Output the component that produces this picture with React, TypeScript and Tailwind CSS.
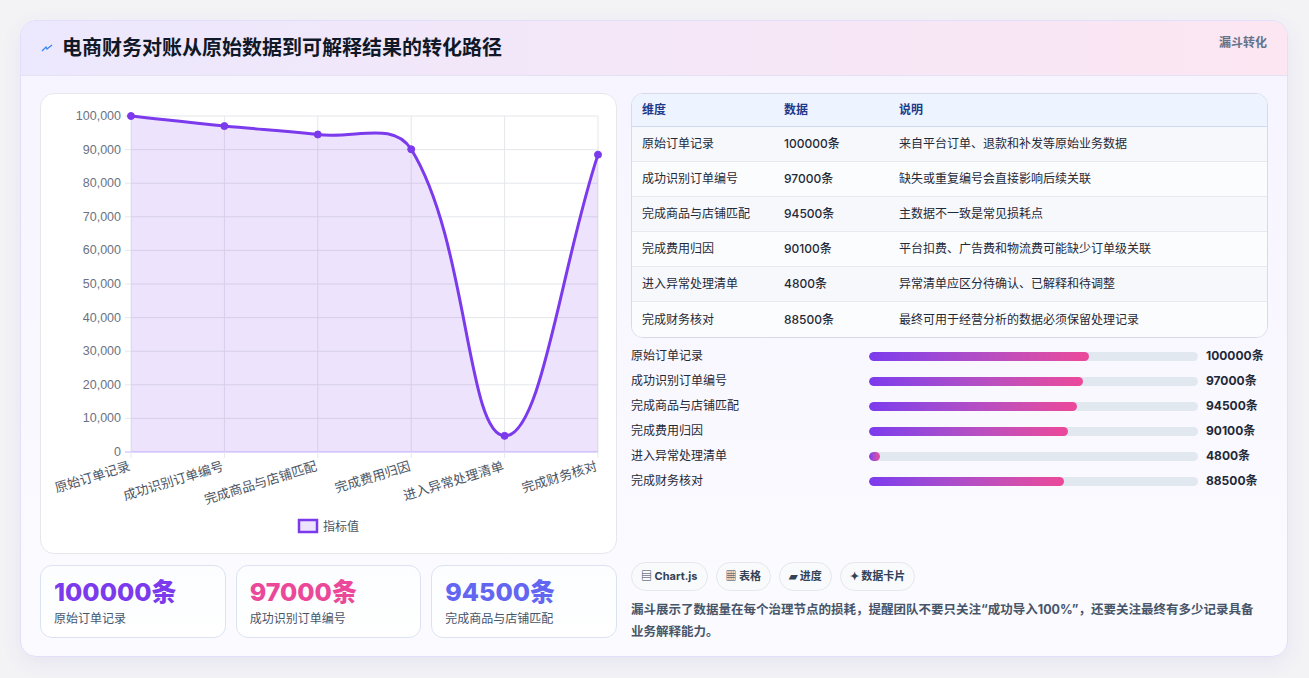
import React from "react";

const data = [
  { n: "原始订单记录", v: 100000, d: "来自平台订单、退款和补发等原始业务数据" },
  { n: "成功识别订单编号", v: 97000, d: "缺失或重复编号会直接影响后续关联" },
  { n: "完成商品与店铺匹配", v: 94500, d: "主数据不一致是常见损耗点" },
  { n: "完成费用归因", v: 90100, d: "平台扣费、广告费和物流费可能缺少订单级关联" },
  { n: "进入异常处理清单", v: 4800, d: "异常清单应区分待确认、已解释和待调整" },
  { n: "完成财务核对", v: 88500, d: "最终可用于经营分析的数据必须保留处理记录" },
];

const X0 = 90, X1 = 557, Y0 = 22, Y1 = 358;
const pts = data.map((d, i) => [X0 + (i * (X1 - X0)) / 5, Y1 - (d.v / 100000) * (Y1 - Y0)]);

function path() {
  const t = 0.4;
  const cps = pts.map((p, i) => {
    const prev = pts[i - 1] || p, next = pts[i + 1] || p;
    const d01 = Math.hypot(p[0] - prev[0], p[1] - prev[1]);
    const d12 = Math.hypot(next[0] - p[0], next[1] - p[1]);
    const s01 = d01 / (d01 + d12 || 1), s12 = d12 / (d01 + d12 || 1);
    const fa = t * s01, fb = t * s12;
    const c1 = [p[0] - fa * (next[0] - prev[0]), Math.min(Y1, Math.max(Y0, p[1] - fa * (next[1] - prev[1])))];
    const c2 = [p[0] + fb * (next[0] - prev[0]), Math.min(Y1, Math.max(Y0, p[1] + fb * (next[1] - prev[1])))];
    return { c1, c2 };
  });
  let s = `M${pts[0][0]},${pts[0][1]}`;
  for (let i = 1; i < pts.length; i++) {
    s += ` C${cps[i - 1].c2[0]},${cps[i - 1].c2[1]} ${cps[i].c1[0]},${cps[i].c1[1]} ${pts[i][0]},${pts[i][1]}`;
  }
  return s;
}

function Chart() {
  const d = path();
  const ticks = Array.from({ length: 11 }, (_, i) => i * 10000);
  return (
    <svg width="577" height="461" className="block">
      {ticks.map((t) => {
        const y = Y1 - (t / 100000) * (Y1 - Y0);
        return (
          <g key={t}>
            <line x1={X0 - 6} x2={X1} y1={y} y2={y} stroke={t === 0 ? "#c4b5fd" : "#e5e7eb"} />
            <text x={X0 - 10} y={y + 4} textAnchor="end" fontSize="12.5" fill="#6b7280" fontFamily="Liberation Sans, sans-serif">
              {t.toLocaleString("en-US")}
            </text>
          </g>
        );
      })}
      {pts.map((p, i) => (
        <line key={i} x1={p[0]} x2={p[0]} y1={Y0} y2={Y1 + 6} stroke="#e5e7eb" />
      ))}
      <path d={`${d} L${X1},${Y1} L${X0},${Y1} Z`} fill="rgba(124,58,237,0.14)" />
      <path d={d} fill="none" stroke="#7c3aed" strokeWidth="3" />
      {pts.map((p, i) => (
        <circle key={i} cx={p[0]} cy={p[1]} r="3.5" fill="#7c3aed" stroke="#7c3aed" />
      ))}
      {pts.map((p, i) => (
        <text key={i} x={p[0]} y={Y1 + 18} textAnchor="end" fontSize="13" fill="#4b5563"
          fontFamily="Noto Sans CJK SC, sans-serif" transform={`rotate(-17 ${p[0]} ${Y1 + 18})`}>
          {data[i].n}
        </text>
      ))}
      <rect x="258" y="426" width="18" height="12" fill="rgba(124,58,237,0.14)" stroke="#7c3aed" strokeWidth="2.5" />
      <text x="282" y="437" fontSize="12" fill="#4b5563" fontFamily="Noto Sans CJK SC, sans-serif">指标值</text>
    </svg>
  );
}

export default function App() {
  return (
    <div className="w-[1309px] h-[678px] bg-[#f3f3f6] p-[20px] pb-0" style={{ fontFamily: "Inter, 'Noto Sans CJK SC', sans-serif" }}>
      <div className="w-[1268px] h-[637px] rounded-[16px] border border-[#e3defa] bg-gradient-to-b from-[#f6f4ff] to-[#fbfbff] overflow-hidden shadow-[0_6px_20px_rgba(80,60,160,0.08)]">
        <div className="h-[55px] flex items-center justify-between px-[20px] bg-gradient-to-r from-[#ece8fd] to-[#fce6f2] border-b border-[#e6e1f5]">
          <div className="flex items-center gap-[9px]">
            <svg width="12" height="12" viewBox="0 0 12 12"><path d="M1 9 L5 5 L6 7 L11 3" stroke="#3b82f6" strokeWidth="1.3" fill="none" /></svg>
            <span className="text-[20px] font-bold text-[#111827]">电商财务对账从原始数据到可解释结果的转化路径</span>
          </div>
          <span className="text-[12px] font-bold text-[#64748b] -mt-[10px]">漏斗转化</span>
        </div>
        <div className="flex gap-[14px] px-[19px] pt-[17px]">
          <div className="w-[577px] flex flex-col gap-[11px]">
            <div className="h-[461px] bg-white rounded-[14px] border border-[#e5e7eb]"><Chart /></div>
            <div className="grid grid-cols-3 gap-[10px]">
              {[
                ["text-[#7c3aed]", data[0]],
                ["text-[#ec4899]", data[1]],
                ["text-[#6366f1]", data[2]],
              ].map(([c, d]: any, i) => (
                <div key={i} className="h-[73px] rounded-[12px] border border-[#dbe3f3] bg-gradient-to-b from-[#fbfdff] to-white px-[13px] pt-[10px]">
                  <div className={`text-[25px] font-extrabold leading-[32px] ${c}`}>{d.v}条</div>
                  <div className="text-[12px] text-[#475569] mt-[2px]">{d.n}</div>
                </div>
              ))}
            </div>
          </div>
          <div className="w-[638px] flex flex-col">
            <div className="rounded-[12px] border border-[#d6dbe6] overflow-hidden bg-white">
              <div className="h-[33px] flex items-center bg-[#eef4ff] border-b border-[#cfdaf0] text-[12px] font-bold text-[#1e3a8a]">
                <div className="w-[152px] pl-[10px]">维度</div><div className="w-[115px]">数据</div><div>说明</div>
              </div>
              {data.map((d, i) => (
                <div key={i} className={`h-[35px] flex items-center text-[12px] text-[#1f2937] ${i % 2 ? "bg-[#fbfcfe]" : "bg-[#f7f8fc]"} ${i < 5 ? "border-b border-[#e6e9f0]" : ""}`}>
                  <div className="w-[152px] pl-[10px]">{d.n}</div>
                  <div className="w-[115px] font-medium">{d.v}条</div>
                  <div>{d.d}</div>
                </div>
              ))}
            </div>
            <div className="mt-[9px] flex flex-col gap-[7px]">
              {data.map((d, i) => (
                <div key={i} className="h-[18px] flex items-center text-[12px]">
                  <div className="w-[238px] text-[#1f2937]">{d.n}</div>
                  <div className="w-[329px] h-[9px] rounded-full bg-[#e2e8f0] overflow-hidden">
                    <div className="h-full rounded-full bg-gradient-to-r from-[#7c3aed] to-[#ec4899]" style={{ width: `${(d.v / 100000) * 67}%` }} />
                  </div>
                  <div className="ml-[8px] font-bold text-[#1f2937]">{d.v}条</div>
                </div>
              ))}
            </div>
            <div className="mt-[72px] flex gap-[8px]">
              {["▤ Chart.js", "▦ 表格", "▰ 进度", "✦ 数据卡片"].map((t) => (
                <span key={t} className="h-[29px] px-[9px] flex items-center rounded-full border border-[#e5e7eb] bg-[#f8fafc] text-[11px] font-bold text-[#334155]">{t}</span>
              ))}
            </div>
            <p className="mt-[8px] pr-[8px] text-[12.5px] leading-[22px] font-bold text-[#475569]">
              漏斗展示了数据量在每个治理节点的损耗，提醒团队不要只关注“成功导入100%”，还要关注最终有多少记录具备业务解释能力。
            </p>
          </div>
        </div>
      </div>
    </div>
  );
}
